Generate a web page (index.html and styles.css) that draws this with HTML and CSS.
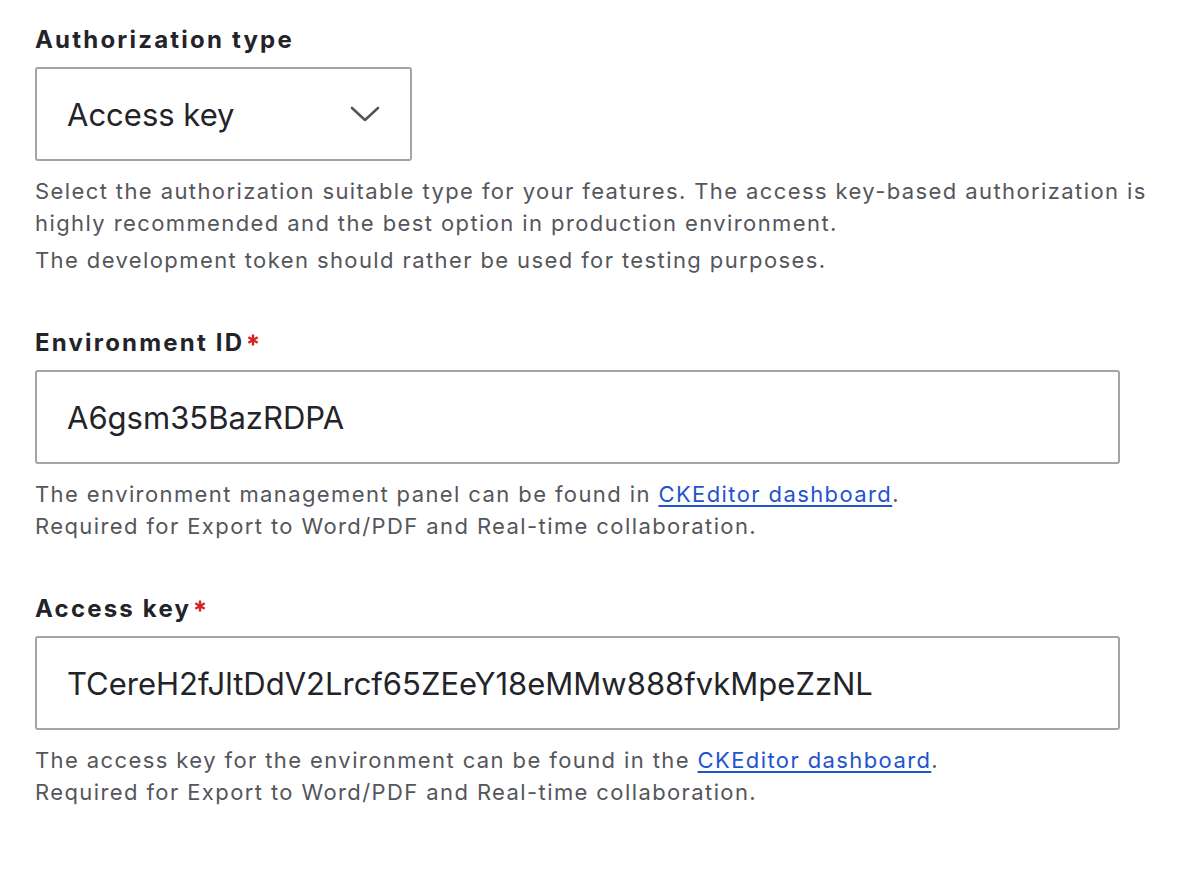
FILE: index.html
```html
<!DOCTYPE html>
<html lang="en">
<head>
<meta charset="utf-8">
<title>Authorization settings</title>
<link rel="stylesheet" href="styles.css">
</head>
<body>
<form class="form">
  <div class="field">
    <label class="label" for="auth-type">Authorization type</label>
    <div class="select">
      <span class="select-value" id="auth-type">Access key</span>
      <svg class="chevron" width="30" height="16" viewBox="0 0 30 16" aria-hidden="true">
        <path d="M2 2 L15 14 L28 2" fill="none" stroke="#55565b" stroke-width="2.6" stroke-linecap="round" stroke-linejoin="round"/>
      </svg>
    </div>
    <div class="desc">
      <p>Select the authorization suitable type for your features. The access key-based authorization is highly recommended and the best option in production environment.</p>
      <p>The development token should rather be used for testing purposes.</p>
    </div>
  </div>

  <div class="field">
    <label class="label" for="env-id"><span>Environment ID</span><svg class="req" width="12" height="12" viewBox="0 0 10 10" aria-hidden="true"><path d="M5 0.5V9.5M1.1 2.75L8.9 7.25M8.9 2.75L1.1 7.25" stroke="#d72222" stroke-width="2"/></svg></label>
    <div class="input" id="env-id">A6gsm35BazRDPA</div>
    <div class="desc">
      <p>The environment management panel can be found in <a href="#">CKEditor dashboard</a>.<br>Required for Export to Word/PDF and Real-time collaboration.</p>
    </div>
  </div>

  <div class="field">
    <label class="label" for="access-key"><span>Access key</span><svg class="req" width="12" height="12" viewBox="0 0 10 10" aria-hidden="true"><path d="M5 0.5V9.5M1.1 2.75L8.9 7.25M8.9 2.75L1.1 7.25" stroke="#d72222" stroke-width="2"/></svg></label>
    <div class="input" id="access-key">TCereH2fJltDdV2Lrcf65ZEeY18eMMw888fvkMpeZzNL</div>
    <div class="desc">
      <p>The access key for the environment can be found in the <a href="#">CKEditor dashboard</a>.<br>Required for Export to Word/PDF and Real-time collaboration.</p>
    </div>
  </div>
</form>
</body>
</html>
```

FILE: styles.css
```css
html, body {
  margin: 0;
  padding: 0;
  background: #ffffff;
}

body {
  font-family: Inter, "Noto Sans", "Liberation Sans", sans-serif;
  color: #232429;
}

.form {
  display: flex;
  flex-direction: column;
  gap: 52px;
  padding: 25px 0 0 35px;
  width: 1130px;
}

.field {
  display: flex;
  flex-direction: column;
}

.label {
  display: flex;
  align-items: flex-start;
  gap: 3px;
  font-size: 24px;
  font-weight: 700;
  line-height: 30px;
  letter-spacing: 2.2px;
  color: #232429;
  margin-bottom: 12px;
}

.req {
  margin-top: 6px;
}

.select,
.input {
  box-sizing: border-box;
  height: 94px;
  border: 2px solid #a2a4aa;
  border-radius: 3px;
  font-size: 31px;
  color: #232429;
  display: flex;
  align-items: center;
  padding: 0 30px;
}

.select {
  width: 377px;
  justify-content: space-between;
  padding-right: 30px;
}

.input {
  width: 1085px;
}

.desc {
  margin-top: 14px;
  font-size: 22px;
  line-height: 32px;
  letter-spacing: 1.4px;
  color: #55565b;
  display: flex;
  flex-direction: column;
  gap: 5px;
}

.desc p {
  margin: 0;
}

.desc a {
  color: #1f54cf;
  text-decoration: underline;
  text-underline-offset: 3px;
}
```
